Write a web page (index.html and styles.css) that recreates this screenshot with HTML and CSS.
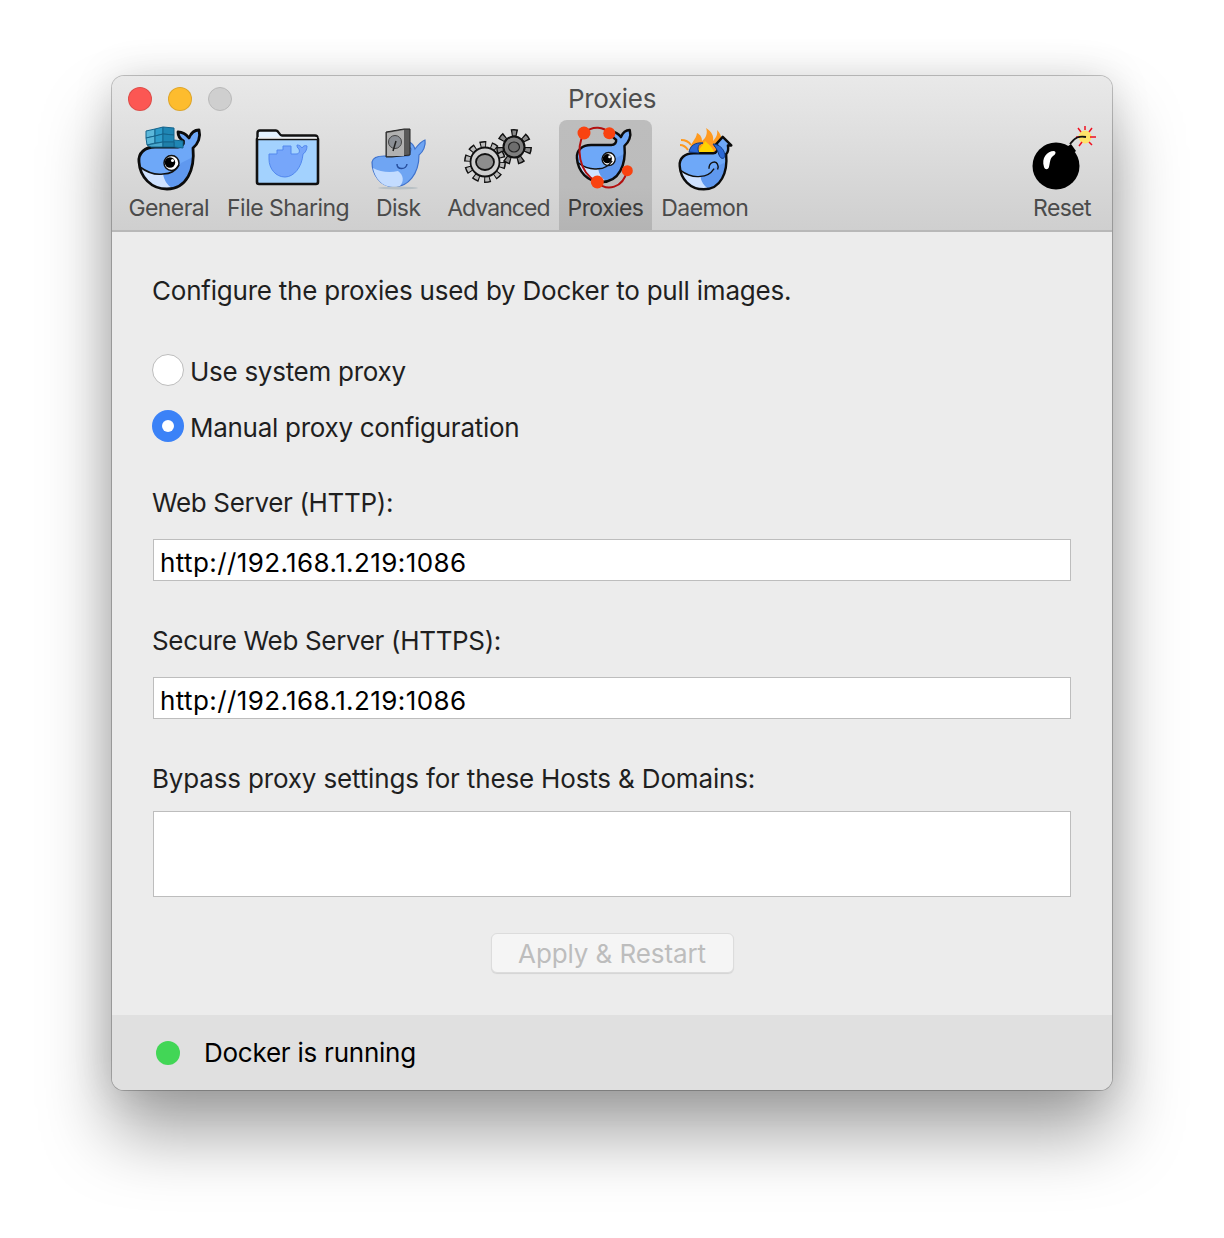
FILE: index.html
```html
<!DOCTYPE html>
<html lang="en">
<head>
<meta charset="utf-8">
<title>Proxies</title>
<link rel="stylesheet" href="styles.css">
</head>
<body>
<svg class="defs" width="0" height="0" aria-hidden="true">
  <defs>
    <path id="body" d="M2 35C1 26 8 20 18 20L41 20C45 20 47 17 46.500 14C43 12 41 9 41 5C45 5 49 7 52 11C54 6 58 3 62 3C64 10 61 17 56 21C58 42 50 62 30 62C14 62 3 50 2 35Z"/>
    <path id="belly" d="M3 40C11 46 19 48 26 47C27 53 30 58 35 61C33 62 31 62 29 62C15 62 6 52 3 40Z"/>
    <path id="shade" d="M26 47C34 47 40 42 44 36L56 30C55 46 47 58 35 61C30 58 27 53 26 47Z"/>
    <g id="eye">
      <circle cx="0" cy="0" r="7.500" fill="#fff" stroke="#111" stroke-width="1.500"/>
      <circle cx="-1.500" cy="-.5" r="5.200" fill="#000"/>
      <circle cx="1" cy="-2.500" r="1.500" fill="#fff"/>
    </g>
    <g id="whale-bold">
      <use href="#body" class="w-fill"/>
      <use href="#shade" class="w-shade"/>
      <use href="#belly" class="w-belly"/>
      <use href="#body" class="w-line"/>
    </g>
  </defs>
</svg>
<div class="window">
  <header class="chrome">
    <div class="titlebar">
      <div class="lights">
        <span class="light red"></span>
        <span class="light yellow"></span>
        <span class="light grey"></span>
      </div>
      <div class="title">Proxies</div>
    </div>
    <nav class="toolbar">
      <div class="tab">
        <svg class="icon" viewBox="0 0 72 72">
          <g transform="translate(4 5)">
            <use href="#whale-bold"/>
            <g stroke="#14648c" stroke-width="1">
              <path d="M9 4L18 2V9L9 11Z" fill="#5cb8da"/>
              <path d="M18 2L26 0V7L18 9Z" fill="#2e9bc9"/>
              <path d="M26 0L37 1V8L26 7Z" fill="#1f86b4"/>
              <path d="M9 11L18 9V16L10 18Z" fill="#5cb8da"/>
              <path d="M18 9L26 7V15L18 16Z" fill="#2e9bc9"/>
              <path d="M26 7L37 8V15L26 15Z" fill="#1f86b4"/>
              <path d="M37 13L46 14V21L37 20Z" fill="#1f86b4"/>
              <path d="M10 18L26 15V20H14Z" fill="#4aa8cd"/>
              <path d="M26 15L37 15V20H26Z" fill="#1f7fa9"/>
            </g>
            <use href="#eye" x="34.500" y="36"/>
            <path d="M3 40C11 46 19 48 26 47C34 47 38 44 42 38" class="mark"/>
          </g>
        </svg>
        <span class="tab-label">General</span>
      </div>
      <div class="tab">
        <svg class="icon" viewBox="0 0 72 72">
          <path d="M5.500 16V11C5.500 9.500 6.500 8.500 8 8.500H24C27 8.500 27 13.500 30 13.500H63C64.500 13.500 65.500 14.500 65.500 16V26H5.500Z" fill="#e4f2ff" stroke="#111" stroke-width="2.400"/>
          <path d="M5 17H66V60C66 61.500 65 62 64 62H7C6 62 5 61.500 5 60Z" fill="#a3d2fe" stroke="#111" stroke-width="2.600" stroke-linejoin="round"/>
          <path d="M6 16H65" stroke="#fff" stroke-width="1.600"/>
          <path d="M17 37V32H25V28H31V24H39V32H44C47 32 48 30 47 27C45 26 45 24 45 23C47 23 49 24 50 26C51 24 53 23 55 24C55 28 53 31 51 32C50 45 42 55 33 55C24 55 17 47 17 37Z" fill="#76a6fa" stroke="#5288ee" stroke-width="1"/>
        </svg>
        <span class="tab-label loose">File Sharing</span>
      </div>
      <div class="tab tab-wide">
        <svg class="icon" viewBox="0 0 72 72">
          <path d="M10 40C11 35 16 34 22 34H46C48 32 49 30 49 27C47 25 46 23 47 20C50 21 52 24 53 27C56 23 60 19 63 18C64 24 61 30 57 33C57 52 46 65 32 65C18 65 10 52 10 40Z" fill="#6fa5f3" stroke="#3f72cc" stroke-width="1.200"/>
          <path d="M11 46C18 50 28 51 36 49C42 53 42 60 38 64C35 65 33 65 31 65C20 65 13 56 11 46Z" fill="#c3dcff"/>
          <ellipse cx="36" cy="66" rx="20" ry="1.500" fill="#b8c0c4"/>
          <path d="M24 10L42 7H48V33L30 35H24Z" fill="#5a5a5a" stroke="#222" stroke-width="1"/>
          <path d="M25 11L42 8V34L25 34Z" fill="#b1b1b1"/>
          <circle cx="33" cy="20" r="6.500" fill="#8b8f95" stroke="#444"/>
          <path d="M31 29L34 19" stroke="#222" stroke-width="1.500"/>
          <path d="M35 42C35 48 44 48 45 42" class="sleep"/>
        </svg>
        <span class="tab-label">Disk</span>
      </div>
      <div class="tab">
        <svg class="icon" viewBox="0 0 72 72">
          <circle cx="52" cy="25" r="14" class="teeth small"/>
          <circle cx="52" cy="25" r="14" class="teeth-in small"/>
          <circle cx="52" cy="25" r="10.500" fill="#7f7f7f" stroke="#111" stroke-width="2"/>
          <ellipse cx="52" cy="25" rx="5.500" ry="5" fill="#6e6e6e" stroke="#222" stroke-width="1.200"/>
          <circle cx="23" cy="40" r="17" class="teeth"/>
          <circle cx="23" cy="40" r="17" class="teeth-in"/>
          <circle cx="23" cy="40" r="14.500" fill="#cfcfcf" stroke="#111" stroke-width="1.800"/>
          <ellipse cx="23" cy="40" rx="9" ry="8" fill="#8d8d8d" stroke="#111" stroke-width="1.800"/>
        </svg>
        <span class="tab-label tight">Advanced</span>
      </div>
      <div class="tab active">
        <svg class="icon" viewBox="0 0 72 72">
          <g transform="translate(6.200 5.400) scale(.88)">
            <use href="#whale-bold"/>
            <use href="#eye" x="38" y="36"/>
            <path d="M3 40C11 46 19 48 26 47C34 47 38 44 42 38" class="mark"/>
          </g>
          <path d="M15 11C24 3 35 5 40 11M15 11C7 26 9 50 28 60C38 70 54 66 58 49" class="orbit"/>
          <circle cx="15" cy="11" r="6.500" class="node"/>
          <circle cx="40.300" cy="11.300" r="6" class="node"/>
          <circle cx="58.300" cy="48.700" r="5.500" class="node"/>
          <circle cx="28.300" cy="60" r="6.500" class="node"/>
        </svg>
        <span class="tab-label">Proxies</span>
      </div>
      <div class="tab">
        <svg class="icon" viewBox="0 0 72 72">
          <path d="M21 28C21 21 27 18 28 11C32 13 33 16 33 19C37 16 39 11 37 6C43 10 45 14 44 19C47 16 49 12 48 8C54 14 54 22 50 30Z" fill="#ff9a1f"/>
          <path d="M29 30C31 25 34 24 36 19C39 22 43 24 45 30Z" fill="#ffd400"/>
          <path d="M12 18C16 18 20 20 22 23M11 23C14 23 17 25 19 28" stroke="#ff9a1f" stroke-width="2" fill="none"/>
          <g transform="translate(9 14) scale(.86)">
            <path d="M2 35C1 26 8 20 18 20L41 20C45 20 47 16 46 11H43L52 1L62 11H58C59 16 58 19 56 21C58 42 50 62 30 62C14 62 3 50 2 35Z" class="w-fill"/>
            <use href="#shade" class="w-shade"/>
            <use href="#belly" class="w-belly"/>
            <path d="M2 35C1 26 8 20 18 20L41 20C45 20 47 16 46 11H43L52 1L62 11H58C59 16 58 19 56 21C58 42 50 62 30 62C14 62 3 50 2 35Z" class="w-line"/>
            <path d="M36 38C36 30 44 28 46 33C47 35 47 37 46 39" class="mark"/>
            <path d="M3 40C11 46 19 48 26 47C34 47 38 44 42 38" class="mark"/>
          </g>
          <path d="M20 30C21 24 26 20 34 21C29 22 28 26 30 31Z M44 22C49 22 55 26 56 33C56 37 52 38 50 33C49 29 47 26 44 22Z" fill="#2c69d6" stroke="#123a80" stroke-width="1"/>
        </svg>
        <span class="tab-label">Daemon</span>
      </div>
      <div class="tab tab-end">
        <svg class="icon" viewBox="0 0 72 72">
          <circle cx="59" cy="15" r="6.500" fill="#ffe36a"/>
          <path d="M59 4V8M52 6L55 10M66 6L63 10M50 15H54M64 15H70M53 24L56 20M66 23L63 20" stroke="#f01020" stroke-width="1.500"/>
          <path d="M44 22C49 15 53 14 60 15" stroke="#111" stroke-width="1.800" fill="none"/>
          <path d="M38 27L45 22L50 29L44 34Z" fill="#000"/>
          <circle cx="30" cy="44" r="23.500" fill="#000"/>
          <path d="M18 45C15 36 21 29 28 29C31 30 29 33 27 34C24 36 24 41 23 45C22 48 19 48 18 45Z" fill="#fff"/>
        </svg>
        <span class="tab-label">Reset</span>
      </div>
    </nav>
  </header>
  <main class="content">
    <p class="intro">Configure the proxies used by Docker to pull images.</p>
    <div class="radios">
      <label class="radio-row"><span class="radio"></span><span class="radio-text">Use system proxy</span></label>
      <label class="radio-row"><span class="radio checked"></span><span class="radio-text">Manual proxy configuration</span></label>
    </div>
    <label class="field-label first">Web Server (HTTP):</label>
    <input class="field" type="text" value="http://192.168.1.219:1086">
    <label class="field-label">Secure Web Server (HTTPS):</label>
    <input class="field" type="text" value="http://192.168.1.219:1086">
    <label class="field-label bypass">Bypass proxy settings for these Hosts &amp; Domains:</label>
    <textarea class="field area"></textarea>
    <div class="actions"><button class="apply" type="button" disabled>Apply &amp; Restart</button></div>
  </main>
  <footer class="status">
    <span class="dot"></span>
    <span class="status-text">Docker is running</span>
  </footer>
</div>
</body>
</html>
```
FILE: styles.css
```css
* { box-sizing: border-box; }
html, body { margin: 0; background: #fff; }
body {
  padding: 76px 112px 148px;
  font-family: Inter, "Liberation Sans", sans-serif;
  font-size: 26px;
  color: #1f1f1f;
  overflow: hidden;
}
.defs { position: absolute; }
.window {
  width: 1000px;
  height: 1014px;
  border-radius: 12px;
  overflow: hidden;
  background: #ececec;
  display: flex;
  flex-direction: column;
  box-shadow: 0 0 0 1px rgba(0,0,0,.22), 0 44px 70px rgba(0,0,0,.36), 0 0 40px rgba(0,0,0,.13);
}
.chrome {
  height: 156px;
  background: linear-gradient(#e9e9e9, #cfcfcf);
  border-bottom: 2px solid #b8b8b8;
  flex: none;
}
.titlebar {
  height: 44px;
  display: grid;
  grid-template-columns: 1fr auto 1fr;
  align-items: center;
  padding: 1px 16px 0;
}
.lights { display: flex; gap: 16px; padding-top: 1px; }
.light { width: 24px; height: 24px; border-radius: 50%; border: 1px solid rgba(0,0,0,.12); }
.red { background: #fc5753; }
.yellow { background: #fdbc2e; }
.grey { background: #cfcfcf; border-color: #b9b9b9; }
.title { grid-column: 2; color: #4e4e4e; font-size: 26px; letter-spacing: -.3px; }
.toolbar { display: flex; height: 110px; padding: 0 12px 0 7.500px; }
.tab {
  padding: 2px 9px 0;
  display: flex;
  flex-direction: column;
  align-items: center;
  color: #4b4b4b;
  border-radius: 8px 8px 0 0;
}
.tab-wide { min-width: 80px; }
.tab-end { margin-left: auto; }
.active { background: linear-gradient(#bdbdbd, #bcbcbc 60%, #b4b4b4); color: #3c3c3c; }
.icon { width: 72px; height: 72px; flex: none; margin: 0 -20px; }
.tab-label { font-size: 23px; line-height: 28px; letter-spacing: -.6px; white-space: nowrap; }
.loose { letter-spacing: -.5px; }
.tight { letter-spacing: -.95px; }
.w-fill { fill: #6ea8f8; }
.w-shade { fill: #5f98ef; }
.w-belly { fill: #cfe2ff; }
.w-line { fill: none; stroke: #0c0c0c; stroke-width: 2.800; stroke-linejoin: round; }
.mark { fill: none; stroke: #111; stroke-width: 1.600; }
.sleep { fill: none; stroke: #274f9e; stroke-width: 1.500; }
.orbit { fill: none; stroke: #b21010; stroke-width: 2; }
.node { fill: #f94210; }
.teeth { fill: none; stroke: #111; stroke-width: 8; stroke-dasharray: 6 4.680; }
.teeth-in { fill: none; stroke: #bbb; stroke-width: 5; stroke-dasharray: 4 6.680; stroke-dashoffset: -1; }
.teeth.small { stroke-dasharray: 6 6.570; }
.teeth-in.small { stroke: #8a8a8a; stroke-dasharray: 3.500 9.070; stroke-dashoffset: -1.200; }
.content { flex: 1; padding: 43px 40px 0; display: flex; flex-direction: column; align-items: stretch; }
.intro { margin: 0; line-height: 32px; letter-spacing: -.22px; }
.radios { margin-top: 47px; display: flex; flex-direction: column; gap: 24px; }
.radio-row { display: flex; align-items: flex-start; gap: 6px; height: 32px; letter-spacing: -.28px; }
.radio-text { line-height: 36px; }
.radio { width: 32px; height: 32px; border-radius: 50%; background: #fff; border: 1.500px solid #bdbdbd; flex: none; }
.checked { border: 0; background: #3b82f7; display: flex; align-items: center; justify-content: center; }
.checked::after { content: ""; width: 12px; height: 12px; border-radius: 50%; background: #fff; }
.field-label { display: block; line-height: 32px; margin-top: 44px; letter-spacing: -.33px; }
.field-label.first { margin-top: 45px; }
.field-label.bypass { letter-spacing: -.16px; }
.field {
  display: block;
  width: 918px;
  height: 42px;
  margin: 20px 0 0 1px;
  padding: 5px 6px 0;
  border: 1.500px solid #bdbdbd;
  border-radius: 0;
  background: #fff;
  font: inherit;
  color: #000;
  letter-spacing: .4px;
  resize: none;
  outline: 0;
}
.bypass + .field { margin-top: 16px; }
.area { height: 86px; }
.actions { display: flex; justify-content: center; margin-top: 36px; }
.apply {
  width: 243px;
  height: 40px;
  padding: 0;
  border: 1px solid #dcdcdc;
  border-radius: 6px;
  background: #f5f5f5;
  box-shadow: 0 1px 1px rgba(0,0,0,.1);
  color: #bdbdbd;
  font: inherit;
  letter-spacing: -.1px;
}
.status {
  height: 75px;
  flex: none;
  background: #e0e0e0;
  display: flex;
  align-items: center;
  padding-left: 44px;
  gap: 24px;
  color: #000;
}
.dot { width: 24px; height: 24px; border-radius: 50%; background: #42d656; flex: none; }
.status-text { letter-spacing: -.24px; }
```
